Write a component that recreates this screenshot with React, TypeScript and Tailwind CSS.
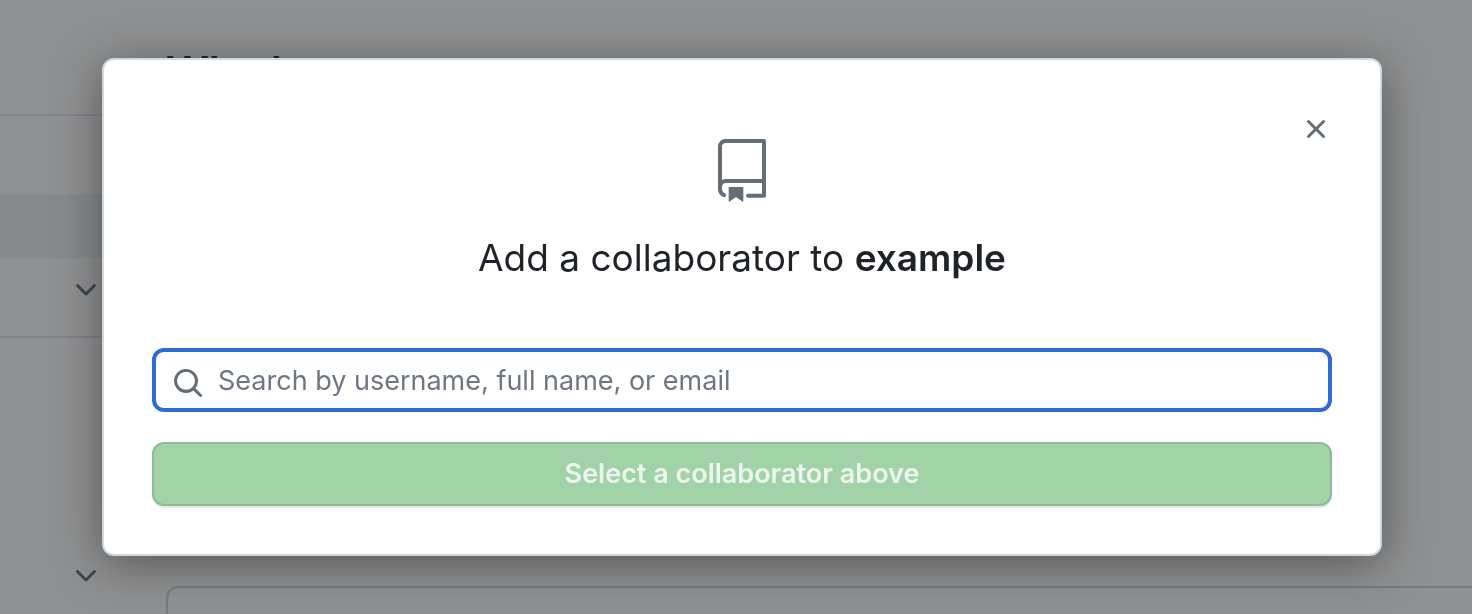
import React from "react";

const CHEVRON =
  "M12.78 5.22a.749.749 0 0 1 0 1.06l-4.25 4.25a.749.749 0 0 1-1.06 0L3.22 6.28a.749.749 0 1 1 1.06-1.06L8 8.939l3.72-3.719a.749.749 0 0 1 1.06 0Z";
const CLOSE =
  "M3.72 3.72a.75.75 0 0 1 1.06 0L8 6.94l3.22-3.22a.749.749 0 0 1 1.275.326.749.749 0 0 1-.215.734L9.06 8l3.22 3.22a.749.749 0 0 1-.326 1.275.749.749 0 0 1-.734-.215L8 9.06l-3.22 3.22a.751.751 0 0 1-1.042-.018.751.751 0 0 1-.018-1.042L6.94 8 3.72 4.78a.75.75 0 0 1 0-1.06Z";
const SEARCH =
  "M10.68 11.74a6 6 0 0 1-7.922-8.982 6 6 0 0 1 8.982 7.922l3.04 3.04a.749.749 0 0 1-.326 1.275.749.749 0 0 1-.734-.215ZM11.5 7a4.499 4.499 0 1 0-8.997 0A4.499 4.499 0 0 0 11.5 7Z";

function Icon({ d }: { d: string }) {
  return (
    <svg viewBox="0 0 16 16" aria-hidden="true" className="size-8 shrink-0 fill-current">
      <path d={d} />
    </svg>
  );
}

function RepoIcon() {
  return (
    <svg viewBox="0 0 24 24" aria-hidden="true" className="size-16 fill-[#656d76]">
      <path d="M3 2.75A2.75 2.75 0 0 1 5.75 0h14.5a.75.75 0 0 1 .75.75v20.5a.75.75 0 0 1-.75.75h-6a.75.75 0 0 1 0-1.5h5.25v-4H6A1.5 1.5 0 0 0 4.5 18v.75c0 .716.43 1.334 1.05 1.605a.75.75 0 0 1-.6 1.374A3.251 3.251 0 0 1 3 18.75ZM19.5 1.5H5.75c-.69 0-1.25.56-1.25 1.25v12.651A2.989 2.989 0 0 1 6 15h13.5Z" />
      <path d="M7 18.25a.25.25 0 0 1 .25-.25h5a.25.25 0 0 1 .25.25v5.01a.25.25 0 0 1-.397.201l-2.206-1.604a.25.25 0 0 0-.294 0L7.397 23.46a.25.25 0 0 1-.397-.2v-5.01Z" />
    </svg>
  );
}

function SettingsPage() {
  return (
    <div className="flex h-screen overflow-hidden bg-white text-[#24292f]" aria-hidden="true">
      <nav className="w-[118px] shrink-0">
        <div className="h-[116px] border-b-2 border-[#e6e6f2]" />
        <div className="h-[78px]" />
        <div className="h-16 bg-[#eef3f5]" />
        <div className="flex h-20 justify-end border-b-2 border-[#e6e6f2] pt-4 pr-4 text-[#656b73]">
          <Icon d={CHEVRON} />
        </div>
        <div className="flex justify-end pt-[222px] pr-4 text-[#656b73]">
          <Icon d={CHEVRON} />
        </div>
      </nav>
      <main className="grow pt-12 pl-12">
        <h2 className="h-[538px] text-[42px] leading-[48px] font-semibold">Who has access</h2>
        <div className="-mr-4 h-24 rounded-xl border-2 border-[#ccd5dc]" />
      </main>
    </div>
  );
}

function CollaboratorDialog() {
  return (
    <section
      role="dialog"
      aria-modal="true"
      aria-labelledby="dialog-title"
      className="relative w-full rounded-xl border-2 border-[#d0d7de] bg-white px-12 pt-[79px] pb-12 shadow-[0_8px_48px_rgba(0,0,0,0.4)]"
    >
      <button type="button" aria-label="Close" className="absolute top-[53px] right-12 text-[#656d76]">
        <Icon d={CLOSE} />
      </button>
      <div className="flex justify-center">
        <RepoIcon />
      </div>
      <h1 id="dialog-title" className="mt-[31px] text-center text-[37px] leading-[48px] text-[#1f2328]">
        Add a collaborator to <strong className="font-semibold">example</strong>
      </h1>
      <form className="mt-[66px] flex flex-col gap-[30px]">
        <label className="flex h-16 items-center gap-[14px] rounded-xl border-4 border-[#2f6ad6] px-4 pt-[6px] text-[#656d76]">
          <Icon d={SEARCH} />
          <input
            type="text"
            aria-label="Search by username, full name, or email"
            placeholder="Search by username, full name, or email"
            className="min-w-0 grow bg-transparent pb-1 text-[27px] leading-[40px] outline-none placeholder:text-[#6e7781]"
          />
        </label>
        <button
          type="submit"
          disabled
          className="h-16 rounded-xl border-2 border-[#8fb896] bg-[#a2d2a8] text-[27px] leading-[40px] font-semibold text-[#ecf6ee] shadow-[0_2px_0_rgba(31,35,40,0.1)]"
        >
          Select a collaborator above
        </button>
      </form>
    </section>
  );
}

export default function App() {
  return (
    <div className="font-['Inter','Liberation_Sans',sans-serif]">
      <SettingsPage />
      <div className="fixed inset-0 flex items-start bg-[#1f2124]/50 pt-[58px] pr-[90px] pl-[102px]">
        <CollaboratorDialog />
      </div>
    </div>
  );
}
